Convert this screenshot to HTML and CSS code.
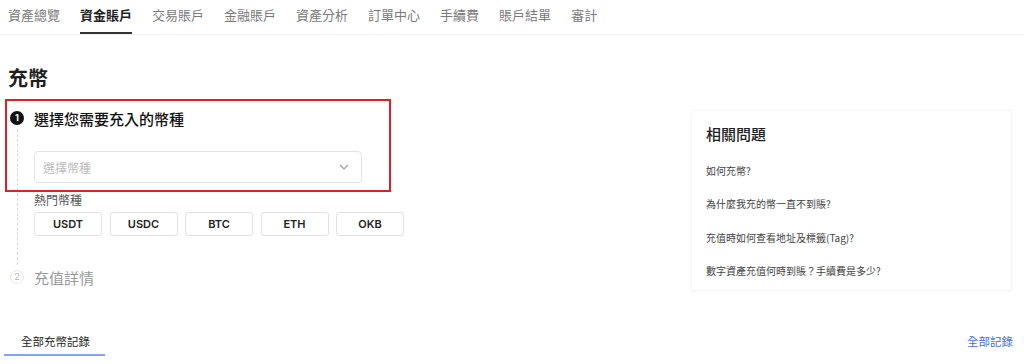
FILE: index.html
```html
<!DOCTYPE html>
<html lang="zh-Hant">
<head>
    <meta charset="UTF-8">
    <meta name="viewport" content="width=device-width, initial-scale=1.0">
    <title>充幣</title>
    <link rel="stylesheet" href="styles.css">
</head>
<body>
    <nav class="tabs">
        <a class="tab">資產總覽</a>
        <a class="tab active">資金賬戶</a>
        <a class="tab">交易賬戶</a>
        <a class="tab">金融賬戶</a>
        <a class="tab">資產分析</a>
        <a class="tab">訂單中心</a>
        <a class="tab">手續費</a>
        <a class="tab">賬戶結單</a>
        <a class="tab">審計</a>
    </nav>

    <main class="main">
        <section class="deposit">
            <h1 class="title">充幣</h1>

            <div class="steps">
                <div class="highlight">
                    <div class="step-head">
                        <span class="step-num">1</span>
                        <span class="step-title">選擇您需要充入的幣種</span>
                    </div>
                    <div class="select">
                        <span class="placeholder">選擇幣種</span>
                        <svg class="chevron" width="10" height="6" viewBox="0 0 10 6">
                            <path d="M1 1l4 4 4-4" fill="none" stroke="#9a9a9a" stroke-width="1.1"/>
                        </svg>
                    </div>
                </div>

                <div class="step-body">
                    <div class="hot-label">熱門幣種</div>
                    <div class="coins">
                        <button class="coin">USDT</button>
                        <button class="coin">USDC</button>
                        <button class="coin">BTC</button>
                        <button class="coin">ETH</button>
                        <button class="coin">OKB</button>
                    </div>
                </div>

                <div class="step-head step-off">
                    <span class="step-num">2</span>
                    <span class="step-title">充值詳情</span>
                </div>
            </div>
        </section>

        <aside class="faq">
            <h2>相關問題</h2>
            <ul>
                <li>如何充幣?</li>
                <li>為什麼我充的幣一直不到賬?</li>
                <li>充值時如何查看地址及標籤(Tag)?</li>
                <li>數字資產充值何時到賬？手續費是多少?</li>
            </ul>
        </aside>
    </main>

    <div class="records">
        <a class="records-tab">全部充幣記錄</a>
        <a class="records-all">全部記錄</a>
    </div>
</body>
</html>
```

FILE: styles.css
```css
body {
    margin: 0;
    padding: 0;
    background: #fff;
    font-family: "Noto Sans CJK TC", "Noto Sans", sans-serif;
    color: #222;
    overflow: hidden;
}

.tabs {
    display: flex;
    gap: 20px;
    padding-left: 8px;
    height: 34px;
    border-bottom: 1px solid #f0f0f0;
}

.tab {
    font-size: 13px;
    line-height: 20px;
    padding-top: 5px;
    color: #7a7a7a;
    box-sizing: border-box;
    height: 34px;
    border-bottom: 2px solid transparent;
}

.tab.active {
    color: #1e1e1e;
    font-weight: 600;
    border-bottom-color: #333;
}

.main {
    display: flex;
    justify-content: space-between;
    padding: 0 12px 0 5px;
}

.deposit {
    width: 410px;
}

.title {
    margin: 29px 0 7px 3px;
    font-size: 20px;
    line-height: 28px;
    font-weight: 700;
    color: #1e1e1e;
}

.steps {
    position: relative;
}

.steps::before {
    content: "";
    position: absolute;
    left: 12px;
    top: 30px;
    height: 136px;
    border-left: 1px dashed #d8d8d8;
}

.highlight {
    position: relative;
    width: 386px;
    height: 93px;
    box-sizing: border-box;
    border: 2px solid #e02020;
    padding: 6px 0 0 3px;
}

.step-head {
    position: relative;
    display: flex;
    align-items: center;
    gap: 10px;
    height: 22px;
}

.step-num {
    width: 14px;
    height: 14px;
    border-radius: 50%;
    background: #111;
    color: #fff;
    font-size: 9px;
    font-weight: 700;
    line-height: 14px;
    text-align: center;
    font-family: "Inter", sans-serif;
}

.step-title {
    font-size: 15px;
    font-weight: 500;
    color: #121212;
}

.select {
    display: flex;
    align-items: center;
    justify-content: space-between;
    margin: 22px 0 0 24px;
    width: 328px;
    height: 32px;
    box-sizing: border-box;
    border: 1px solid #e4e4e4;
    border-radius: 4px;
    padding: 0 12px 0 8px;
}

.placeholder {
    font-size: 12px;
    color: #bdbdbd;
}

.step-body {
    padding-left: 29px;
}

.hot-label {
    font-size: 12px;
    line-height: 16px;
    color: #555;
}

.coins {
    display: flex;
    gap: 7.5px;
    margin-top: 4px;
}

.coin {
    width: 68px;
    height: 24px;
    background: #fff;
    border: 1px solid #e2e2e2;
    border-radius: 3px;
    font-family: "Inter", "Noto Sans", sans-serif;
    font-size: 11px;
    font-weight: 600;
    color: #222;
    padding: 0;
}

.step-off {
    margin: 30px 0 0 5px;
}

.step-off .step-num {
    box-sizing: border-box;
    background: #fff;
    border: 1px solid #e6e6e6;
    color: #b5b5b5;
    font-weight: 400;
    line-height: 12px;
}

.step-off .step-title {
    color: #9a9a9a;
    font-weight: 400;
}

.faq {
    margin-top: 75px;
    width: 321px;
    height: 181px;
    box-sizing: border-box;
    padding: 12px 14px 0;
    border: 1px solid #f6f6f6;
    box-shadow: 0 1px 4px rgba(0, 0, 0, 0.03);
}

.faq h2 {
    margin: 0;
    font-size: 15px;
    line-height: 22px;
    font-weight: 500;
    color: #1e1e1e;
}

.faq ul {
    list-style: none;
    margin: 9px 0 0;
    padding: 0;
}

.faq li {
    font-size: 10px;
    line-height: 33.3px;
    color: #444;
}

.records {
    display: flex;
    justify-content: space-between;
    align-items: flex-start;
    margin-top: 40px;
    padding: 0 11px 0 4px;
}

.records-tab {
    font-size: 11.5px;
    line-height: 20px;
    padding: 0 15px 3px 17px;
    color: #222;
    border-bottom: 2px solid #7ea6f4;
}

.records-all {
    font-size: 11.5px;
    line-height: 20px;
    color: #3a6ff0;
}
```
